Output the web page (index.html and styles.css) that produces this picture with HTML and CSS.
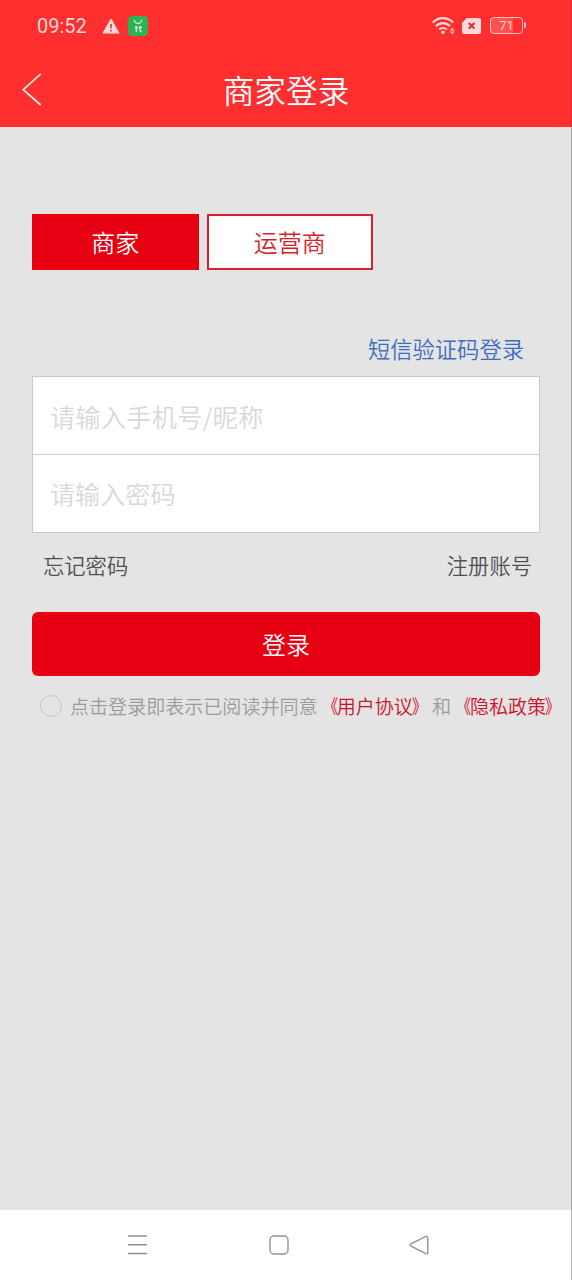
FILE: index.html
```html
<!DOCTYPE html>
<html lang="zh-CN">
<head>
<meta charset="utf-8">
<title>商家登录</title>
<link rel="stylesheet" href="styles.css">
</head>
<body>
<div class="screen">
  <header class="header">
    <div class="status">
      <span class="time">09:52</span>
      <svg class="warn" width="18" height="16" viewBox="0 0 18 16"><path d="M9 1 17 15H1Z" fill="#ffd9d9" stroke="#ffd9d9" stroke-linejoin="round"/><path d="M9 6v4.500M9 12v1.600" stroke="#e8383a" stroke-width="1.700"/></svg>
      <svg class="app" width="20" height="20" viewBox="0 0 20 20"><rect width="20" height="20" rx="4.500" fill="#2db355"/><path d="M6.300 3.700a3.700 3.700 0 0 0 7.400 0" fill="none" stroke="#d9f6df" stroke-width="1.200"/><path d="M7 11.500h3M8.300 10v6M11 11.500h3M12 10v4.500q0 1.200 1.600 1" fill="none" stroke="#d9f6df" stroke-width="1.300"/></svg>
      <span class="spacer"></span>
      <svg class="wifi" width="24" height="19" viewBox="0 0 24 19"><g fill="none" stroke="#ffd9d9" stroke-width="2.100"><path d="M.8 6.500a14 14 0 0 1 20.400 0"/><path d="M4 10.200a9.600 9.600 0 0 1 14 0"/><path d="M7.300 13.500a5.300 5.300 0 0 1 7.400 0"/></g><circle cx="11" cy="16.300" r="1.800" fill="#ffd9d9"/><path d="m20.200 11.200 2.500 3.200h-5Zm0 7.200 2.500-2.900h-5Z" fill="#ffb3b3"/></svg>
      <svg class="sim" width="19" height="16" viewBox="0 0 19 16"><path d="M4.500 0H17q2 0 2 2v12q0 2-2 2H2q-2 0-2-2V5Z" fill="#ffd9d9"/><path d="m6.800 5 5.600 5.600m0-5.600-5.600 5.600" stroke="#d92b30" stroke-width="2"/></svg>
      <div class="battery"><span>71</span></div>
    </div>
    <div class="titlebar">
      <svg class="back" width="20" height="34" viewBox="0 0 20 34"><path d="M18.700 1.800 1.300 17.700 18.700 33" fill="none" stroke="#fff0e8" stroke-width="1.700"/></svg>
      <h1>商家登录</h1>
    </div>
  </header>
  <main class="content">
    <div class="tabs"><button class="tab active">商家</button><button class="tab">运营商</button></div>
    <a class="sms">短信验证码登录</a>
    <form class="fields">
      <input class="field account" type="text" placeholder="请输入手机号/昵称">
      <input class="field" type="password" placeholder="请输入密码">
    </form>
    <div class="links"><a>忘记密码</a><a>注册账号</a></div>
    <button class="submit">登录</button>
    <div class="terms"><i class="radio"></i><span>点击登录即表示已阅读并同意<a><b class="open">《</b>用户协议<b class="close">》</b></a>和<a><b class="open">《</b>隐私政策<b class="close">》</b></a></span></div>
  </main>
  <nav class="nav">
    <svg width="20" height="20" viewBox="0 0 20 20"><path d="M0 1h19M0 9.700h19M0 18.500h19"/></svg>
    <svg width="20" height="20" viewBox="0 0 20 20"><rect x="1" y="1" width="18" height="18" rx="4"/></svg>
    <svg width="20" height="20" viewBox="0 0 20 20"><path d="M2 8.800 16.800 1.300Q18.800.6 18.800 2.500v15q0 1.900-2 1.200L2 11.200Q.3 10 2 8.800Z"/></svg>
  </nav>
</div>
</body>
</html>
```
FILE: styles.css
```css
* { box-sizing: border-box; }
body {
  margin: 0;
  font-family: "Noto Sans CJK SC", sans-serif;
  font-weight: 350;
}
button, input {
  margin: 0;
  padding: 0;
  border: 0;
  border-radius: 0;
  font-family: inherit;
  font-weight: inherit;
}
svg { display: block; flex: none; }
.screen {
  display: flex;
  flex-direction: column;
  width: 572px;
  height: 1280px;
  background: #e4e4e4;
}
.header {
  height: 127px;
  background: #ff2e2f;
  border-right: 1px solid #d33436;
}
.status {
  display: flex;
  align-items: center;
  height: 51px;
  padding: 0 48px 0 37px;
}
.time {
  width: 65px;
  font: 20px/24px Roboto, sans-serif;
  color: #ffd9d9;
}
.app { margin-left: 8px; }
.spacer { flex: 1; }
.sim { margin: 0 9px 0 6px; }
.battery {
  position: relative;
  width: 33px;
  height: 17px;
  border: 1.500px solid #ffc4c4;
  border-radius: 4px;
  background: linear-gradient(90deg, #ff5050 71%, transparent 71%);
  color: #ffd0d0;
  font: 13px/15px Roboto, sans-serif;
  text-align: center;
}
.battery::after {
  content: "";
  position: absolute;
  right: -4px;
  top: 4px;
  width: 2px;
  height: 6px;
  border-radius: 0 2px 2px 0;
  background: #ffc4c4;
}
.titlebar {
  display: grid;
  grid-template-columns: 20px 1fr 20px;
  align-items: center;
  height: 76px;
  padding: 0 21px 0 22px;
}
.titlebar h1 {
  margin: 0;
  font-size: 31.700px;
  line-height: 76px;
  font-weight: 350;
  text-align: center;
  color: #fff;
}
.content {
  flex: 1;
  padding: 87px 31px 0 32px;
  border-right: 1px solid #a6a6a6;
}
.tabs { display: flex; gap: 8px; }
.tab {
  width: 166.500px;
  height: 56px;
  border: 2px solid #dc1d2c;
  background: #fff;
  color: #d71f2a;
  font-size: 24px;
  line-height: 50px;
}
.tab.active {
  border-color: #e60012;
  background: #e60012;
  color: #fff;
}
.sms {
  display: block;
  margin-top: 61px;
  padding-right: 16px;
  font-size: 22.300px;
  line-height: 34px;
  text-align: right;
  color: #3e6dc0;
}
.fields {
  margin-top: 11px;
  border: 1.500px solid #c8c8c8;
}
.field {
  display: block;
  width: 100%;
  height: 77px;
  padding: 0 17px;
  background: #fff;
  font-size: 25.100px;
}
.account { letter-spacing: .35px; }
.field + .field {
  height: 78px;
  padding-bottom: 2px;
  border-top: 1px solid #ccc;
}
.field::placeholder { color: #d8d8d8; opacity: 1; }
.links {
  display: flex;
  justify-content: space-between;
  padding: 0 8px 0 11px;
  margin-top: 16px;
  font-size: 21.300px;
  line-height: 32px;
  color: #505050;
}
.submit {
  display: block;
  width: 508px;
  height: 64px;
  margin-top: 31px;
  border-radius: 6px;
  background: #e60012;
  color: #fff;
  font-size: 24px;
  line-height: 64px;
}
.terms {
  display: flex;
  align-items: center;
  gap: 8px;
  margin-top: 15px;
  padding-left: 8px;
  font-size: 19.060px;
  line-height: 30px;
  white-space: nowrap;
  color: #9b9b9b;
}
.terms a { color: #cf1029; }
.terms b {
  display: inline-block;
  width: 1em;
  font-weight: 400;
}
.open { transform: translateX(1px) scaleX(.78); transform-origin: right; }
.close { transform: translateX(-1px) scaleX(.78); transform-origin: left; }
.radio {
  flex: none;
  width: 22px;
  height: 22px;
  border: 1px solid #c6c6c6;
  border-radius: 50%;
}
.nav {
  display: flex;
  justify-content: space-between;
  align-items: center;
  height: 70px;
  padding: 0 142px 0 128px;
  border-right: 1px solid #b8b8b8;
  background: #fff;
}
.nav svg {
  fill: none;
  stroke: #929292;
  stroke-width: 1.400;
}
```
